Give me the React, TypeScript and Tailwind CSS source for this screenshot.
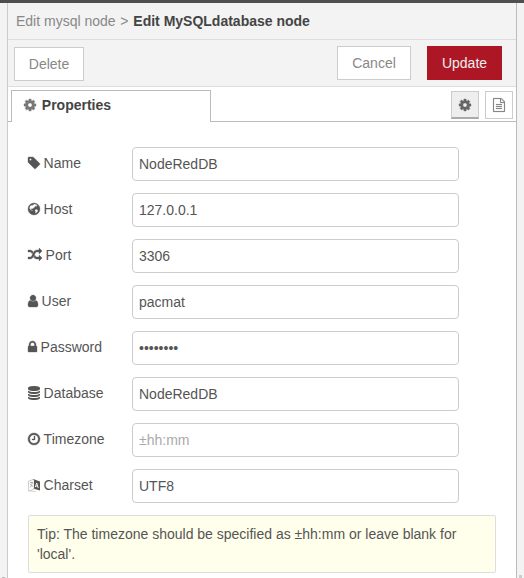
import React from "react";

type IconProps = { name: string; className?: string };

const ICONS: Record<string, { x: number; w: number; d: string }> = {
  cog: { x: 128, w: 12, d: "M1152 896q0-106-75-181t-181-75-181 75-75 181 75 181 181 75 181-75 75-181zm512-109v222q0 12-8 23t-20 13l-185 28q-19 54-39 91 35 50 107 138 10 12 10 25t-9 23q-27 37-99 108t-94 71q-12 0-26-9l-138-108q-44 23-91 38-16 136-29 186-7 28-36 28h-222q-14 0-24.5-8.5t-11.5-21.5l-28-184q-49-16-90-37l-141 107q-10 9-25 9-14 0-25-11-126-114-165-168-7-10-7-23 0-12 8-23 15-21 51-66.5t54-70.5q-27-50-41-99l-183-27q-13-2-21-12.5t-8-23.5v-222q0-12 8-23t19-13l186-28q14-46 39-92-40-57-107-138-10-12-10-24 0-10 9-23 26-36 98.5-107.5t94.5-71.5q13 0 26 10l138 107q44-23 91-38 16-136 29-186 7-28 36-28h222q14 0 24.5 8.5t11.5 21.5l28 184q49 16 90 37l142-107q9-9 24-9 13 0 25 10 129 119 165 170 7 8 7 22 0 12-8 23-15 21-51 66.5t-54 70.5q26 50 41 98l183 28q13 2 21 12.5t8 23.5z" },
  file: { x: 128, w: 12, d: "M1596 380q28 28 48 76t20 88v1152q0 40-28 68t-68 28h-1344q-40 0-68-28t-28-68v-1600q0-40 28-68t68-28h896q40 0 88 20t76 48zm-444-244v376h376q-10-29-22-41l-313-313q-12-12-41-22zm384 1528v-1024h-416q-40 0-68-28t-28-68v-416h-768v1536h1280zm-1024-864q0-14 9-23t23-9h704q14 0 23 9t9 23v64q0 14-9 23t-23 9h-704q-14 0-23-9t-9-23v-64zm736 224q14 0 23 9t9 23v64q0 14-9 23t-23 9h-704q-14 0-23-9t-9-23v-64q0-14 9-23t23-9h704zm0 256q14 0 23 9t9 23v64q0 14-9 23t-23 9h-704q-14 0-23-9t-9-23v-64q0-14 9-23t23-9h704z" },
  tag: { x: 128, w: 12, d: "M576 448q0-53-37.5-90.5t-90.5-37.5-90.5 37.5-37.5 90.5 37.5 90.5 90.5 37.5 90.5-37.5 37.5-90.5zm1067 576q0 53-37 90l-491 492q-39 37-91 37-53 0-90-37l-715-716q-38-37-64.5-101t-26.5-117v-416q0-52 38-90t90-38h416q53 0 117 26.5t102 64.5l715 714q37 39 37 91z" },
  globe: { x: 128, w: 12, d: "M896 128a768 768 0 1 0 0 1536a768 768 0 1 0 0-1536zM900 270l130-15 190 75 110 120-90 20 50 60-120 70-80-60-80 50 50 60-120 40-80 100-100 30-30 90-90-50-100 20-10 80 90 20 40 90 90 20-10 75-110-25-150-120-120-100-60-150 60-190 110-130 140-60 90 30zM1040 960l160-40 140 60 70 90-50 150-130 150-150 80-60-20 50-170-60-130 20-120z" },
  random: { x: 0, w: 14, d: "M666 481q-60 92-137 273-22-45-37-72.5t-40.5-63.5-51-56.5-63-35-81.5-14.5h-224q-14 0-23-9t-9-23v-192q0-14 9-23t23-9h224q250 0 410 225zm1126 799q0 14-9 23l-320 320q-9 9-23 9-13 0-22.5-9.5t-9.5-22.5v-192q-32 0-85 .5t-81 1-73-1-71-5-64-10.5-63-18.5-58-28.5-59-40-55-53.5-56-69.5q59-93 136-273 22 45 37 72.5t40.5 63.5 51 56.5 63 35 81.5 14.5h256v-192q0-14 9-23t23-9q12 0 24 10l319 319q9 9 9 23zm0-896q0 14-9 23l-320 320q-9 9-23 9-13 0-22.5-9.5t-9.5-22.5v-192h-256q-48 0-87 15t-69 45-51 61.5-45 77.5q-32 62-78 171-29 66-49.5 111t-54 105-64 100-74 83-90 68.5-106.5 42-128 16.5h-224q-14 0-23-9t-9-23v-192q0-14 9-23t23-9h224q48 0 87-15t69-45 51-61.5 45-77.5q32-62 78-171 29-66 49.5-111t54-105 64-100 74-83 90-68.5 106.5-42 128-16.5h256v-192q0-14 9-23t23-9q12 0 24 10l319 319q9 9 9 23z" },
  user: { x: 256, w: 10, d: "M1536 1399q0 109-62.5 187t-150.5 78h-854q-88 0-150.5-78t-62.5-187q0-85 8.5-160.5t31.5-152 58.5-131 94-89 134.5-34.5q131 128 313 128t313-128q76 0 134.5 34.5t94 89 58.5 131 31.5 152 8.5 160.5zm-256-887q0 159-112.5 271.5t-271.5 112.5-271.5-112.5-112.5-271.5 112.5-271.5 271.5-112.5 271.5 112.5 112.5 271.5z" },
  lock: { x: 320, w: 9, d: "M640 768h512v-192q0-106-75-181t-181-75-181 75-75 181v192zm832 96v576q0 40-28 68t-68 28h-960q-40 0-68-28t-28-68v-576q0-40 28-68t68-28h32v-192q0-184 132-316t316-132 316 132 132 316v192h32q40 0 68 28t28 68z" },
  database: { x: 128, w: 12, d: "M896 768q237 0 443-43t325-127v170q0 69-103 128t-280 93.5-385 34.5-385-34.5-280-93.5-103-128v-170q119 84 325 127t443 43zm0 768q237 0 443-43t325-127v170q0 69-103 128t-280 93.5-385 34.5-385-34.5-280-93.5-103-128v-170q119 84 325 127t443 43zm0-384q237 0 443-43t325-127v170q0 69-103 128t-280 93.5-385 34.5-385-34.5-280-93.5-103-128v-170q119 84 325 127t443 43zm0-1152q208 0 385 34.5t280 93.5 103 128v128q0 69-103 128t-280 93.5-385 34.5-385-34.5-280-93.5-103-128v-128q0-69 103-128t280-93.5 385-34.5z" },
  clock: { x: 128, w: 12, d: "M1024 544v448q0 14-9 23t-23 9h-320q-14 0-23-9t-9-23v-64q0-14 9-23t23-9h224v-352q0-14 9-23t23-9h64q14 0 23 9t9 23zm416 352q0-148-73-273t-198-198-273-73-273 73-198 198-73 273 73 273 198 198 273 73 273-73 198-198 73-273zm224 0q0 209-103 385.5t-279.5 279.5-385.5 103-385.5-103-279.5-279.5-103-385.5 103-385.5 279.5-279.5 385.5-103 385.5 103 279.5 279.5 103 385.5z" },
};

function Icon({ name, className = "" }: IconProps) {
  const { x, w, d } = ICONS[name];
  return (
    <svg className={`inline-block shrink-0 overflow-visible ${className}`} width={w} height={14} viewBox={`${x} 0 ${w * 128} 1792`} fill="currentColor" fillRule="evenodd" stroke="currentColor" strokeWidth={name === "database" ? 0 : name === "file" ? 20 : 45}>
      <path d={d} />
    </svg>
  );
}

// A faint outlined page on the left, a dark page with a letter on the right.
function LanguageIcon() {
  return (
    <svg className="shrink-0" width="12" height="14" viewBox="0 0 12 14" fill="none">
      <path d="M.4 3.2 6.2 1.2v10L.4 13z" stroke="#999" strokeWidth=".5" />
      <path d="M1.6 5.2 5 4.1M3.1 3.6v1.2M4.4 4.5C4 6.8 3 8.6 1.6 9.6M2.3 6.2c.6 1.2 1.5 2 2.9 2.4" stroke="#888" strokeWidth=".6" />
      <path d="M1.8 13l4 .6 2-.4" stroke="#999" strokeWidth=".4" />
      <path d="M4.4.9 7.2 1.7 12 3.4v9L6 10.8V2z" fill="#555" />
      <path d="M7.3 9.1 8.7 5l1.6 5M7.9 7.9l1.8.5" stroke="#fff" strokeWidth=".9" />
    </svg>
  );
}

const FIELDS = [
  { icon: "tag", label: "Name", value: "NodeRedDB" },
  { icon: "globe", label: "Host", value: "127.0.0.1" },
  { icon: "random", label: "Port", value: "3306" },
  { icon: "user", label: "User", value: "pacmat" },
  { icon: "lock", label: "Password", value: "pacmat12", type: "password" },
  { icon: "database", label: "Database", value: "NodeRedDB" },
  { icon: "clock", label: "Timezone", value: "", placeholder: "±hh:mm" },
  { icon: "language", label: "Charset", value: "UTF8" },
];

export default function App() {
  return (
    <div className="flex h-[578px] w-[524px] flex-col overflow-hidden bg-[#f3f3f3] font-['Liberation_Sans',Arial,sans-serif] text-[14px] leading-5 text-[#555]">
      <div className="h-[3px] shrink-0 bg-[#4f4f4f]" />
      <div className="flex min-h-0 flex-1">
        <div className="flex w-[7px] shrink-0 flex-col justify-end"><div className="ml-[2px] h-px w-[3px] bg-[#bbb]" /></div>
        <main className="flex w-[510px] shrink-0 flex-col border-r border-l border-[#bbb] border-l-[#ccc] bg-white">
          <header className="flex h-[37px] shrink-0 items-center border-b border-[#ddd] bg-[#f3f3f3] pl-2 whitespace-pre">
            <span className="text-[#888]">Edit mysql node</span>
            <span className="px-[4.75px] text-[#888]">&gt;</span>
            <span className="font-bold text-[#444]">Edit MySQLdatabase node</span>
          </header>
          <div className="flex h-[47px] shrink-0 items-start border-b border-[#ddd] bg-[#f3f3f3] pt-[6px] pr-[14px] pl-[6px] text-[#888]">
            <button className="mt-px h-[34px] w-[70px] border border-[#ccc] bg-white">Delete</button>
            <button className="ml-auto h-[34px] w-[74px] border border-[#ccc] bg-white">Cancel</button>
            <button className="ml-4 h-[34px] w-[75px] bg-[#ad1625] text-[#eee]">Update</button>
          </div>
          <div className="flex h-[35px] shrink-0 items-stretch pt-[3px]">
            <div className="w-[3px] border-b border-[#bbb]" />
            <div className="flex w-[200px] items-start gap-[5.8px] border border-b-0 border-[#bbb] pt-1 pl-3">
              <Icon name="cog" className="mt-[3px] text-[#777]" />
              <span className="font-bold text-[#444]">Properties</span>
            </div>
            <div className="flex flex-1 items-start justify-end gap-[6px] border-b border-[#bbb] pt-px pr-[3px]">
              <button className="flex h-7 w-7 items-start justify-center border border-b-2 border-[#ccc] border-b-[#aaa] bg-[#eee] pt-[6px] text-[#666]"><Icon name="cog" /></button>
              <button className="flex h-7 w-7 items-start justify-center border border-[#ccc] bg-white pt-[6px] text-[#888]"><Icon name="file" /></button>
            </div>
          </div>
          <form className="flex flex-col gap-3 pt-[25px] pr-5 pl-5">
            {FIELDS.map((f) => (
              <div key={f.label} className="flex h-[34px] items-center">
                <label className="flex h-[34px] w-[104px] shrink-0 items-start gap-[3.6px] pt-[6px]">
                  <span className="flex pt-[3px]">{f.icon === "language" ? <LanguageIcon /> : <Icon name={f.icon} />}</span>
                  {f.label}
                </label>
                <input
                  type={f.type ?? "text"}
                  defaultValue={f.value}
                  placeholder={f.placeholder}
                  className="h-[34px] w-[327px] rounded-[4px] border border-[#ccc] bg-white px-[6px] text-[#555] outline-none placeholder:text-[#aaa]"
                />
              </div>
            ))}
            <div className="h-[58px] w-[468px] rounded-[2px] border border-[#ddd] bg-[#ffffec] px-2 py-2">
              Tip: The timezone should be specified as ±hh:mm or leave blank for 'local'.
            </div>
          </form>
        </main>
        <div className="flex flex-1 flex-col justify-end"><div className="ml-[2px] h-[3px] w-[3px] bg-[#ccc]" /></div>
      </div>
    </div>
  );
}
